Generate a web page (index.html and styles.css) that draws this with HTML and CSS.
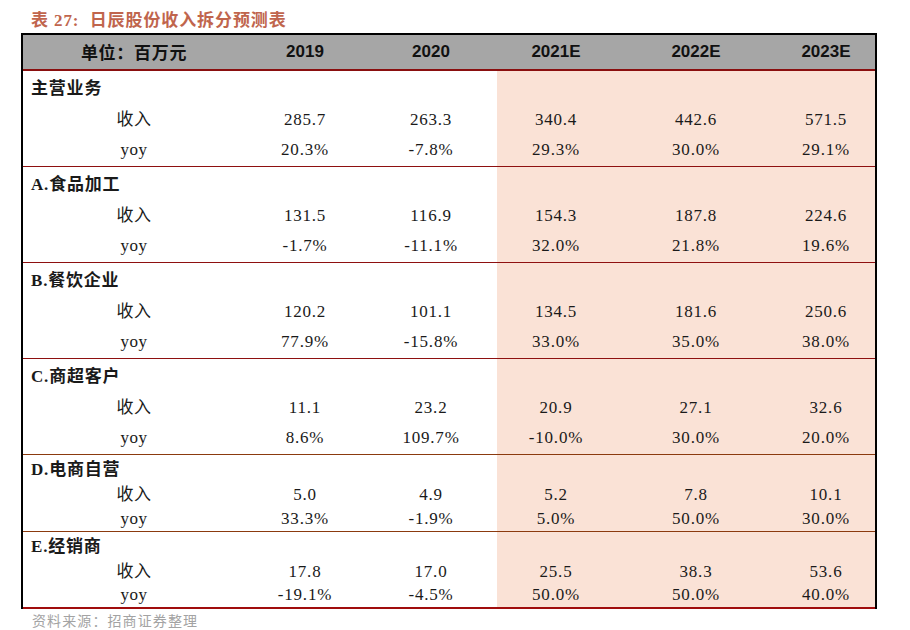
FILE: index.html
```html
<!DOCTYPE html>
<html lang="zh-CN">
<head>
<meta charset="utf-8">
<title>日辰股份收入拆分预测表</title>
<link rel="stylesheet" href="styles.css">
</head>
<body>
<div class="page">
  <div class="caption">表 27:&nbsp; 日辰股份收入拆分预测表</div>
  <table class="forecast">
    <colgroup>
      <col class="c-label">
      <col class="c-2019">
      <col class="c-2020">
      <col class="c-2021">
      <col class="c-2022">
      <col class="c-2023">
    </colgroup>
    <thead>
      <tr>
        <th class="hd-label">单位：百万元</th>
        <th>2019</th>
        <th>2020</th>
        <th>2021E</th>
        <th>2022E</th>
        <th>2023E</th>
      </tr>
    </thead>
    <tbody class="sec big">
      <tr class="r-title"><td class="title">主营业务</td><td></td><td></td><td class="est"></td><td class="est"></td><td class="est"></td></tr>
      <tr class="r-rev"><td class="sub">收入</td><td>285.7</td><td>263.3</td><td class="est">340.4</td><td class="est">442.6</td><td class="est">571.5</td></tr>
      <tr class="r-yoy"><td class="sub">yoy</td><td>20.3%</td><td>-7.8%</td><td class="est">29.3%</td><td class="est">30.0%</td><td class="est">29.1%</td></tr>
    </tbody>
    <tbody class="sec big">
      <tr class="r-title"><td class="title">A.食品加工</td><td></td><td></td><td class="est"></td><td class="est"></td><td class="est"></td></tr>
      <tr class="r-rev"><td class="sub">收入</td><td>131.5</td><td>116.9</td><td class="est">154.3</td><td class="est">187.8</td><td class="est">224.6</td></tr>
      <tr class="r-yoy"><td class="sub">yoy</td><td>-1.7%</td><td>-11.1%</td><td class="est">32.0%</td><td class="est">21.8%</td><td class="est">19.6%</td></tr>
    </tbody>
    <tbody class="sec big">
      <tr class="r-title"><td class="title">B.餐饮企业</td><td></td><td></td><td class="est"></td><td class="est"></td><td class="est"></td></tr>
      <tr class="r-rev"><td class="sub">收入</td><td>120.2</td><td>101.1</td><td class="est">134.5</td><td class="est">181.6</td><td class="est">250.6</td></tr>
      <tr class="r-yoy"><td class="sub">yoy</td><td>77.9%</td><td>-15.8%</td><td class="est">33.0%</td><td class="est">35.0%</td><td class="est">38.0%</td></tr>
    </tbody>
    <tbody class="sec big brown">
      <tr class="r-title"><td class="title">C.商超客户</td><td></td><td></td><td class="est"></td><td class="est"></td><td class="est"></td></tr>
      <tr class="r-rev"><td class="sub">收入</td><td>11.1</td><td>23.2</td><td class="est">20.9</td><td class="est">27.1</td><td class="est">32.6</td></tr>
      <tr class="r-yoy"><td class="sub">yoy</td><td>8.6%</td><td>109.7%</td><td class="est">-10.0%</td><td class="est">30.0%</td><td class="est">20.0%</td></tr>
    </tbody>
    <tbody class="sec small brown">
      <tr class="r-title"><td class="title">D.电商自营</td><td></td><td></td><td class="est"></td><td class="est"></td><td class="est"></td></tr>
      <tr class="r-rev"><td class="sub">收入</td><td>5.0</td><td>4.9</td><td class="est">5.2</td><td class="est">7.8</td><td class="est">10.1</td></tr>
      <tr class="r-yoy"><td class="sub">yoy</td><td>33.3%</td><td>-1.9%</td><td class="est">5.0%</td><td class="est">50.0%</td><td class="est">30.0%</td></tr>
    </tbody>
    <tbody class="sec small last">
      <tr class="r-title"><td class="title">E.经销商</td><td></td><td></td><td class="est"></td><td class="est"></td><td class="est"></td></tr>
      <tr class="r-rev"><td class="sub">收入</td><td>17.8</td><td>17.0</td><td class="est">25.5</td><td class="est">38.3</td><td class="est">53.6</td></tr>
      <tr class="r-yoy"><td class="sub">yoy</td><td>-19.1%</td><td>-4.5%</td><td class="est">50.0%</td><td class="est">50.0%</td><td class="est">40.0%</td></tr>
    </tbody>
  </table>
  <div class="source">资料来源：招商证券整理</div>
</div>
</body>
</html>
```

FILE: styles.css
```css
html, body {
  margin: 0;
  padding: 0;
  background: #ffffff;
}

.page {
  width: 910px;
  height: 630px;
  font-family: "Liberation Serif", "Noto Sans CJK SC", serif;
  color: #1a1a1a;
}

.caption {
  height: 33px;
  box-sizing: border-box;
  padding: 12px 0 0 31px;
  font-size: 17px;
  line-height: 18px;
  font-weight: bold;
  color: #c0654d;
  letter-spacing: 0.9px;
  white-space: pre;
}

.forecast {
  margin-left: 21px;
  width: 856px;
  table-layout: fixed;
  border-collapse: separate;
  border-spacing: 0;
  border-top: 2px solid #000000;
  border-left: 2px solid #000000;
  border-right: 2px solid #000000;
}

.c-label { width: 222px; }
.c-2019 { width: 120px; }
.c-2020 { width: 132px; }
.c-2021 { width: 118px; }
.c-2022 { width: 162px; }
.c-2023 { width: 98px; }

.forecast th {
  height: 34px;
  padding: 0;
  background: #a6a6a6;
  border-bottom: 2px solid #8a0f0f;
  font-family: "Liberation Sans", "Noto Sans CJK SC", sans-serif;
  font-size: 17px;
  line-height: 18px;
  font-weight: bold;
  color: #111111;
  text-align: center;
  vertical-align: middle;
}

.forecast th.hd-label {
  font-family: "Noto Sans CJK SC", sans-serif;
  font-weight: 600;
  letter-spacing: 0.7px;
}

.forecast td {
  padding: 0;
  font-size: 17px;
  line-height: 18px;
  letter-spacing: 0.8px;
  text-align: center;
  vertical-align: middle;
  white-space: nowrap;
}

.forecast td.est {
  background: #fae2d6;
}

.forecast td.title {
  text-align: left;
  padding-left: 8px;
  font-weight: bold;
  letter-spacing: 0.8px;
}

.forecast td.sub {
  letter-spacing: 0.5px;
}

.big .r-title td { height: 35px; }
.big .r-rev td { height: 28px; }
.big .r-yoy td { height: 32px; }

.small .r-title td { height: 29px; }
.small .r-rev td { height: 22px; }
.small .r-yoy td { height: 25px; }

.sec .r-yoy td {
  border-bottom: 1px solid #8e1010;
}

.sec.brown .r-yoy td {
  border-bottom-color: #8b3a0e;
}

.sec.last .r-yoy td {
  height: 24px;
  border-bottom: 2px solid #a00d0d;
}

.source {
  padding: 2px 0 0 32px;
  font-family: "Noto Sans CJK SC", sans-serif;
  font-size: 14px;
  line-height: 18px;
  color: #a3a3a3;
  letter-spacing: 1.1px;
}
```
